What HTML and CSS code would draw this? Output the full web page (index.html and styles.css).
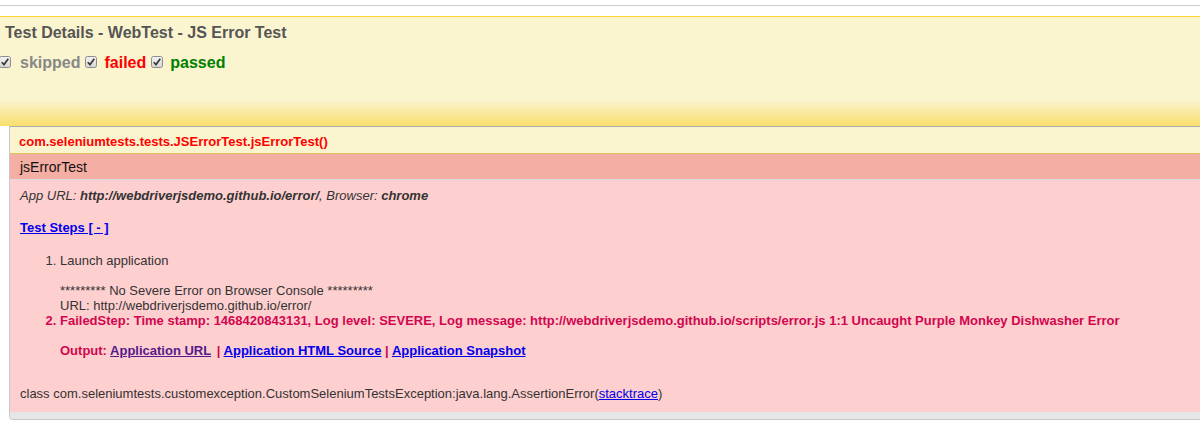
FILE: index.html
```html
<!DOCTYPE html>
<html>
<head>
<meta charset="utf-8">
<link rel="stylesheet" href="styles.css">
</head>
<body>
<div class="topline"></div>
<div class="header">
  <div class="title">Test Details - WebTest - JS Error Test</div>
  <div class="filters">
    <svg class="cb first" viewBox="0 0 12 12"><defs><linearGradient id="g" x1="0" y1="0" x2="0" y2="1"><stop offset="0" stop-color="#f4f4f4"/><stop offset="1" stop-color="#d6d6d6"/></linearGradient></defs><rect x="0.5" y="0.5" width="11" height="11" rx="2" fill="url(#g)" stroke="#8c8c8c"/><path d="M2.8 6.2 L5 8.6 L9.3 2.8" stroke="#3a3a3a" stroke-width="1.7" fill="none"/></svg>
    <span class="lbl skipped">skipped</span>
    <svg class="cb" viewBox="0 0 12 12"><rect x="0.5" y="0.5" width="11" height="11" rx="2" fill="url(#g)" stroke="#8c8c8c"/><path d="M2.8 6.2 L5 8.6 L9.3 2.8" stroke="#3a3a3a" stroke-width="1.7" fill="none"/></svg>
    <span class="lbl failed">failed</span>
    <svg class="cb" viewBox="0 0 12 12"><rect x="0.5" y="0.5" width="11" height="11" rx="2" fill="url(#g)" stroke="#8c8c8c"/><path d="M2.8 6.2 L5 8.6 L9.3 2.8" stroke="#3a3a3a" stroke-width="1.7" fill="none"/></svg>
    <span class="lbl passed">passed</span>
  </div>
</div>
<div class="panel">
  <div class="classrow">com.seleniumtests.tests.JSErrorTest.jsErrorTest()</div>
  <div class="namerow">jsErrorTest</div>
  <div class="content">
    <div class="appinfo">App URL: <b>http://webdriverjsdemo.github.io/error/</b>, Browser: <b>chrome</b></div>
    <div class="toggle"><a href="#" class="link bold">Test Steps [ - ]</a></div>
    <ol class="steps">
      <li>Launch application<br><br>********* No Severe Error on Browser Console *********<br>URL: http://webdriverjsdemo.github.io/error/</li>
      <li class="failstep">FailedStep: Time stamp: 1468420843131, Log level: SEVERE, Log message: http://webdriverjsdemo.github.io/scripts/error.js 1:1 Uncaught Purple Monkey Dishwasher Error<br><br>Output: <a href="#" class="visited">Application URL</a> | <a href="#" class="link">Application HTML Source</a> | <a href="#" class="link">Application Snapshot</a></li>
    </ol>
    <div class="exception">class com.seleniumtests.customexception.CustomSeleniumTestsException:java.lang.AssertionError(<a href="#" class="link normal">stacktrace</a>)</div>
  </div>
  <div class="footer"></div>
</div>
</body>
</html>
```

FILE: styles.css
```css
html, body {
  margin: 0;
  padding: 0;
  background: #fff;
  overflow: hidden;
  font-family: "Liberation Sans", Arial, sans-serif;
}

.topline {
  margin-top: 5px;
  height: 0;
  border-top: 1px solid #cccccc;
}

.header {
  margin-top: 10px;
  height: 109px;
  border-top: 1px solid #ffd633;
  background: linear-gradient(to bottom, #faf4cf 0px, #faf4cf 83px, #f9df6d 109px);
  padding: 0 5px;
  box-sizing: content-box;
}

.title {
  padding-top: 6px;
  font-size: 16px;
  line-height: 19px;
  font-weight: bold;
  color: #555555;
}

.filters {
  display: flex;
  align-items: center;
  margin-top: 11px;
  margin-left: -6px;
  height: 19px;
}

.cb {
  width: 12px;
  height: 12px;
  flex: none;
  margin-top: -2px;
}

.lbl {
  font-size: 16px;
  font-weight: bold;
  line-height: 19px;
  margin-left: 9px;
  margin-right: 5px;
}

.skipped { color: #888888; }
.failed { color: #ff0000; margin-left: 7px; }
.passed { color: #008000; margin-left: 7px; }

.panel {
  margin-left: 9px;
  width: 1200px;
  border-top: 1px solid #adadad;
  border-left: 1px solid #c8c8c8;
  border-bottom: 1px solid #c8c8c8;
  border-bottom-left-radius: 4px;
  overflow: hidden;
}

.classrow {
  height: 26px;
  line-height: 30px;
  padding-left: 9px;
  background: #faf4cf;
  border-bottom: 1px solid #dcc25c;
  color: #ff0000;
  font-weight: bold;
  font-size: 13px;
}

.namerow {
  height: 25px;
  line-height: 26px;
  padding-left: 10px;
  background: #f5aea3;
  border-bottom: 1px solid #dddddd;
  color: #111111;
  font-size: 14px;
}

.content {
  background: #fecfcf;
  padding: 8px 10px 11px 10px;
  font-size: 13px;
  line-height: 15px;
  color: #333333;
}

.appinfo {
  font-style: italic;
}

.toggle {
  margin-top: 17px;
}

.link {
  color: #0000ee;
  text-decoration: underline;
}

.bold { font-weight: bold; }

.visited {
  color: #551a8b;
  text-decoration: underline;
  margin-right: 2px;
}

.steps {
  margin: 18px 0 0 0;
  padding-left: 40px;
}

.failstep {
  color: #d1064e;
  font-weight: bold;
}

.exception {
  margin-top: 28px;
}

.normal { font-weight: normal; }

.footer {
  height: 7px;
  background: #e6e6e6;
}
```
